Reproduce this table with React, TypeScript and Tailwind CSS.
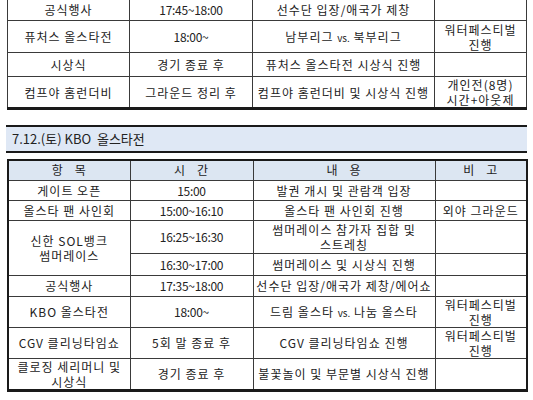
import React from "react";

type Cell = { t: React.ReactNode; rs?: number };
type Row = { h: number; cells: Cell[] };

const VS = () => <span className="text-[10px] tracking-normal">vs.</span>;

const t1: Row[] = [
  { h: 22, cells: [{ t: "공식행사" }, { t: "17:45~18:00" }, { t: "선수단 입장/애국가 제창" }, { t: "" }] },
  { h: 32, cells: [{ t: "퓨처스 올스타전" }, { t: "18:00~" }, { t: <>남부리그 <VS /> 북부리그</> }, { t: <>워터페스티벌<br />진행</> }] },
  { h: 24, cells: [{ t: "시상식" }, { t: "경기 종료 후" }, { t: "퓨처스 올스타전 시상식 진행" }, { t: "" }] },
  { h: 32, cells: [{ t: "컴프야 홈런더비" }, { t: "그라운드 정리 후" }, { t: "컴프야 홈런더비 및 시상식 진행" }, { t: <>개인전(8명)<br />시간+아웃제</> }] },
];

const t2: Row[] = [
  { h: 20, cells: [{ t: "게이트 오픈" }, { t: "15:00" }, { t: "발권 개시 및 관람객 입장" }, { t: "" }] },
  { h: 20, cells: [{ t: "올스타 팬 사인회" }, { t: "15:00~16:10" }, { t: "올스타 팬 사인회 진행" }, { t: "외야 그라운드" }] },
  { h: 33, cells: [{ t: <>신한 SOL뱅크<br />썸머레이스</>, rs: 2 }, { t: "16:25~16:30" }, { t: <>썸머레이스 참가자 집합 및<br />스트레칭</> }, { t: "" }] },
  { h: 22, cells: [{ t: "16:30~17:00" }, { t: "썸머레이스 및 시상식 진행" }, { t: "" }] },
  { h: 21, cells: [{ t: "공식행사" }, { t: "17:35~18:00" }, { t: "선수단 입장/애국가 제창/에어쇼" }, { t: "" }] },
  { h: 31, cells: [{ t: "KBO 올스타전" }, { t: "18:00~" }, { t: <>드림 올스타 <VS /> 나눔 올스타</> }, { t: <>워터페스티벌<br />진행</> }] },
  { h: 29, cells: [{ t: "CGV 클리닝타임쇼" }, { t: "5회 말 종료 후" }, { t: "CGV 클리닝타임쇼 진행" }, { t: <>워터페스티벌<br />진행</> }] },
  { h: 30, cells: [{ t: <>클로징 세리머니 및<br />시상식</> }, { t: "경기 종료 후" }, { t: "불꽃놀이 및 부문별 시상식 진행" }, { t: "" }] },
];

function Cols() {
  return (
    <colgroup>
      <col className="w-[122px]" />
      <col className="w-[123px]" />
      <col className="w-[182px]" />
      <col className="w-[92px]" />
    </colgroup>
  );
}

const isTime = (t: React.ReactNode) => typeof t === "string" && /^[\d:~]+$/.test(t);

function Body({ rows }: { rows: Row[] }) {
  return (
    <tbody>
      {rows.map((r, i) => (
        <tr key={i} style={{ height: r.h }}>
          {r.cells.map((c, j) => (
            <td
              key={j}
              rowSpan={c.rs}
              className={
                "border border-[#3a3a3a] text-center align-middle p-0 leading-[15px] whitespace-nowrap " +
                (isTime(c.t) ? "tracking-[-0.3px]" : "tracking-[1px]")
              }
            >
              {c.t}
            </td>
          ))}
        </tr>
      ))}
    </tbody>
  );
}

export default function App() {
  return (
    <div className="w-[533px] h-[400px] overflow-hidden bg-white text-[12px] text-[#222] font-['Noto_Sans_CJK_KR','Malgun_Gothic',sans-serif]">
      <div className="pl-[7px] -mt-[2px]">
        <table className="border-collapse table-fixed w-[519px] border-x border-b-[3px] border-[#1a1a1a]">
          <Cols />
          <Body rows={t1} />
        </table>
      </div>
      <div className="mt-[15px] ml-[6px] w-[521px] h-[28px] border-y-2 border-[#1a1a1a] bg-[#dfe8f5] flex items-center pl-[6px] text-[13px]">
        7.12.(토) KBO&nbsp;&nbsp;올스타전
      </div>
      <div className="pl-[7px] mt-[6px]">
        <table className="border-collapse table-fixed w-[519px] border-2 border-b-[3px] border-[#1a1a1a]">
          <Cols />
          <thead>
            <tr className="h-[20px] bg-[#dce6f2]">
              {["항 목", "시 간", "내 용", "비 고"].map((h) => (
                <th key={h} className="border border-[#3a3a3a] font-normal text-center p-0 whitespace-pre tracking-[1px]">
                  {h.replace(" ", "   ")}
                </th>
              ))}
            </tr>
          </thead>
          <Body rows={t2} />
        </table>
      </div>
    </div>
  );
}
